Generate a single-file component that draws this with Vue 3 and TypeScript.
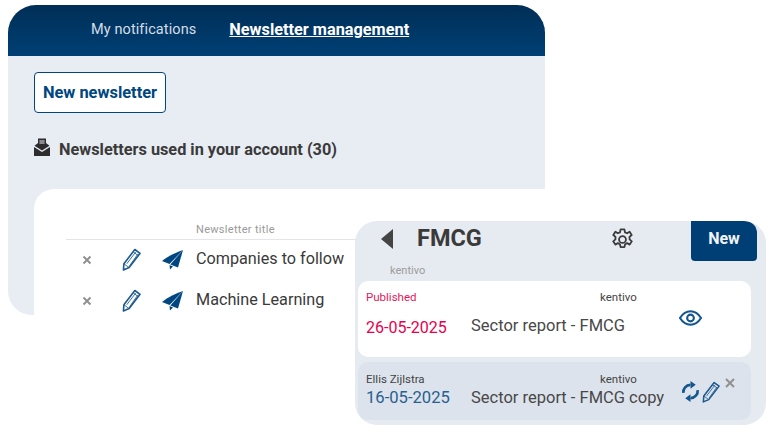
<template>
  <div class="page">
    <section class="main-panel">
      <nav class="topnav">
        <a class="nav-link">My notifications</a>
        <a class="nav-link active">Newsletter management</a>
      </nav>
      <div class="panel-body">
        <button type="button" class="btn-outline">New newsletter</button>
        <h2 class="section-title">
          <svg class="mail-icon" viewBox="0 0 16 18" aria-hidden="true">
            <path d="M4 0.5h8v4.500l3.500 2.800L8 12.500 0.500 7.800 4 5z" fill="#2d2d2d" />
            <path d="M5.400 2.600h5.200v1H5.400zM5.400 4.600h5.200v1H5.400z" fill="#e8ecf3" />
            <path d="M0 9l8 5 8-5v9H0z" fill="#2d2d2d" />
          </svg>
          Newsletters used in your account (30)
        </h2>
        <div class="table-card">
          <div class="table-head">Newsletter title</div>
          <div v-for="row in newsletters" :key="row" class="table-row">
            <svg class="icon-x" viewBox="0 0 10 10" aria-hidden="true">
              <path d="M1.500 1.500l7 7M8.500 1.500l-7 7" />
            </svg>
            <svg class="icon-pencil" viewBox="0 0 20 24" aria-hidden="true">
              <path d="M13.500 1.500L19 5.500 7.500 20.500 1.500 23 2 16.500z" />
              <path d="M11.800 4l5.500 4M5 16.500L14.500 4M8 18.500L16.500 6.500M2 16.500l5.500 4" class="thin" />
            </svg>
            <svg class="icon-plane" viewBox="0 0 22 20" aria-hidden="true">
              <path d="M21 0C14 2.500 6 6 0 11l7.500 3z" />
              <path d="M21 0L8.300 14.500 16 17.500z" />
              <path d="M7.500 15l.5 4.500 3-3z" />
            </svg>
            <span class="row-title">{{ row }}</span>
          </div>
        </div>
      </div>
    </section>

    <section class="report-panel">
      <header class="report-head">
        <span class="back-arrow"></span>
        <h1 class="report-title">FMCG</h1>
        <svg class="icon-gear" viewBox="0 0 24 24" aria-hidden="true">
          <path d="M10 1.500h4l.6 3 2.200 1 2.600-1.600 2.200 3.400-2.300 2 .1 2.600 2.300 2-2.200 3.400-2.700-1.500-2.100 1.100-.7 3.100h-4l-.7-3.100-2.100-1.100-2.700 1.500-2.200-3.400 2.300-2 .1-2.600-2.300-2 2.200-3.400 2.600 1.600 2.200-1z" />
          <circle cx="12" cy="12" r="3.600" />
        </svg>
        <button type="button" class="btn-new">New</button>
      </header>
      <div class="report-owner">kentivo</div>

      <article class="report-card published">
        <span class="author">Published</span>
        <span class="source">kentivo</span>
        <span class="date">26-05-2025</span>
        <span class="title">Sector report - FMCG</span>
        <div class="actions">
          <svg class="icon-eye" viewBox="0 0 24 16" aria-hidden="true">
            <path d="M1 8c3-4.600 6.800-7 11-7s8 2.400 11 7c-3 4.600-6.800 7-11 7S4 12.600 1 8z" />
            <circle cx="12" cy="8" r="3.500" />
          </svg>
        </div>
      </article>

      <article class="report-card draft">
        <span class="author">Ellis Zijlstra</span>
        <span class="source">kentivo</span>
        <span class="date">16-05-2025</span>
        <span class="title">Sector report - FMCG copy</span>
        <div class="actions">
          <svg class="icon-sync" viewBox="0 0 20 22" aria-hidden="true">
            <path class="line" d="M2.500 12.500A7.500 7.500 0 0 1 10 4M17.500 9.500A7.500 7.500 0 0 1 10 18" />
            <path d="M10 0l5.500 4L10 8zM10 14l-5.500 4 5.500 4z" />
          </svg>
          <svg class="icon-pencil" viewBox="0 0 20 24" aria-hidden="true">
            <path d="M13.500 1.500L19 5.500 7.500 20.500 1.500 23 2 16.500z" />
            <path d="M11.800 4l5.500 4M5 16.500L14.500 4M8 18.500L16.500 6.500M2 16.500l5.500 4" class="thin" />
          </svg>
          <svg class="icon-x small" viewBox="0 0 10 10" aria-hidden="true">
            <path d="M1 1l8 8M9 1l-8 8" />
          </svg>
        </div>
      </article>
    </section>
  </div>
</template>

<script setup lang="ts">
const newsletters: string[] = ['Companies to follow', 'Machine Learning']
</script>

<style>
html,
body {
  background: #fff;
}
</style>

<style scoped>
.page {
  position: relative;
  width: 776px;
  height: 433px;
  padding: 5px 0 0 8px;
  box-sizing: border-box;
  overflow: hidden;
  font-family: Roboto, "Liberation Sans", sans-serif;
  color: #3a3a3a;
}

/* Main panel */
.main-panel {
  width: 537px;
  height: 310px;
  display: flex;
  flex-direction: column;
  background: #e8ecf3;
  border-radius: 28px 28px 24px 24px;
  overflow: hidden;
}

.topnav {
  height: 51px;
  flex: none;
  display: flex;
  align-items: center;
  gap: 33px;
  padding: 0 0 2px 83px;
  box-sizing: border-box;
  background: linear-gradient(#002f56, #003f75);
}

.nav-link {
  font-size: 14.5px;
  color: #d5dde6;
  letter-spacing: 0.1px;
}

.nav-link.active {
  font-weight: 700;
  font-size: 16.3px;
  letter-spacing: 0;
  color: #fff;
  text-decoration: underline;
}

.panel-body {
  flex: 1;
  display: flex;
  flex-direction: column;
  align-items: flex-start;
  padding: 16px 0 0 26px;
  min-height: 0;
}

.btn-outline {
  flex: none;
  width: 132px;
  height: 41px;
  padding: 0;
  background: #fff;
  border: 1px solid #004680;
  border-radius: 4px;
  color: #004680;
  font: 700 16.4px Roboto, sans-serif;
}

.section-title {
  flex: none;
  display: flex;
  align-items: center;
  gap: 9px;
  margin: 26px 0 0;
  height: 20px;
  font-size: 16.3px;
  font-weight: 700;
  color: #3a3a3a;
}

.mail-icon {
  width: 16px;
  height: 18px;
  margin-top: -4px;
}

.table-card {
  flex: none;
  align-self: stretch;
  height: 140px;
  box-sizing: border-box;
  margin-top: 30px;
  padding: 34px 0 0 32px;
  background: #fff;
  border-top-left-radius: 20px;
}

.table-head {
  height: 17px;
  box-sizing: border-box;
  padding-left: 130px;
  border-bottom: 1px solid #e3e5ea;
  font-size: 11px;
  letter-spacing: 0.3px;
  color: #9a9a9a;
}

.table-row {
  display: flex;
  align-items: center;
  height: 41px;
  position: relative;
  font-size: 16.2px;
}

.table-row .icon-x {
  width: 10px;
  height: 10px;
  margin: -2px 0 0 16px;
}

.table-row .icon-pencil {
  width: 19px;
  height: 23px;
  margin: -2px 0 0 30px;
}

.icon-plane {
  width: 22px;
  height: 20px;
  margin: -2px 0 0 21px;
  fill: #004680;
}

.row-title {
  margin: -4px 0 0 12px;
}

.icon-x path {
  fill: none;
  stroke: #8f8f8f;
  stroke-width: 1.9;
}

.icon-pencil path {
  fill: none;
  stroke: #1d5a90;
  stroke-width: 1.7;
  stroke-linejoin: round;
}

.icon-pencil .thin {
  stroke-width: 0.9;
}

/* Report panel on top */
.report-panel {
  position: absolute;
  left: 355px;
  top: 221px;
  width: 411px;
  height: 204px;
  padding: 0 3px;
  box-sizing: border-box;
  background: #e6eaf1;
  border-radius: 22px;
  overflow: hidden;
}

.report-head {
  display: flex;
  align-items: flex-start;
  height: 40px;
}

.back-arrow {
  width: 0;
  height: 0;
  margin: 8px 0 0 23px;
  border-style: solid;
  border-width: 10px 12px 10px 0;
  border-color: transparent #444 transparent transparent;
}

.report-title {
  margin: 3px 0 0 24px;
  width: 194px;
  font-size: 23.5px;
  line-height: 28px;
  font-weight: 700;
  color: #3a3a3a;
}

.icon-gear {
  width: 23px;
  height: 23px;
  margin-top: 7px;
  fill: none;
  stroke: #3c3c3c;
  stroke-width: 1.9;
  stroke-linejoin: round;
}

.btn-new {
  width: 66px;
  height: 40px;
  margin-left: 57px;
  padding: 0 0 6px;
  background: #003f75;
  border: 0;
  border-radius: 0 12px 4px 4px;
  color: #f2f4f8;
  font: 700 16px Roboto, sans-serif;
}

.report-owner {
  height: 20px;
  padding-left: 32px;
  font-size: 11px;
  line-height: 19px;
  color: #9c9c9c;
}

.report-card {
  display: grid;
  grid-template-columns: 105px 129px 80px 1fr;
  margin-bottom: 5px;
  width: 393px;
  padding-left: 8px;
  box-sizing: border-box;
  border-radius: 10px;
}

.report-card.published {
  height: 76px;
  padding-top: 9px;
  grid-template-rows: 15px 1fr;
  background: #fff;
}

.report-card.draft {
  height: 58px;
  padding-top: 10px;
  grid-template-rows: 14px 1fr;
  background: #dde3ec;
}

.author,
.source {
  font-size: 11.5px;
  line-height: 14px;
  color: #444;
}

.source {
  grid-column: 3;
}

.date {
  grid-row: 2;
  font-size: 16px;
  color: #27608f;
}

.title {
  grid-row: 2;
  grid-column: 2 / 4;
  font-size: 16.5px;
  color: #484848;
}

.published .author {
  color: #e6175c;
}

.published .date {
  color: #e6004c;
  margin-top: 13px;
}

.published .title {
  margin-top: 11px;
}

.draft .date {
  font-size: 16.6px;
}

.draft .date,
.draft .title {
  margin-top: 2px;
}

.actions {
  grid-column: 4;
  grid-row: 1 / 3;
  display: flex;
}

.published .actions {
  align-items: flex-start;
  padding-top: 20px;
}

.icon-eye {
  width: 23px;
  height: 16px;
  margin-left: -1px;
  fill: none;
  stroke: #14568e;
  stroke-width: 2.2;
}

.icon-sync {
  width: 19px;
  height: 21px;
  margin: 9px 0 0 1px;
  fill: #14568e;
}

.icon-sync .line {
  fill: none;
  stroke: #14568e;
  stroke-width: 2.8;
}

.draft .icon-pencil {
  width: 18px;
  height: 22px;
  margin: 9px 0 0 2px;
}

.icon-x.small {
  width: 10px;
  height: 10px;
  margin: 6px 0 0 5px;
}
</style>
